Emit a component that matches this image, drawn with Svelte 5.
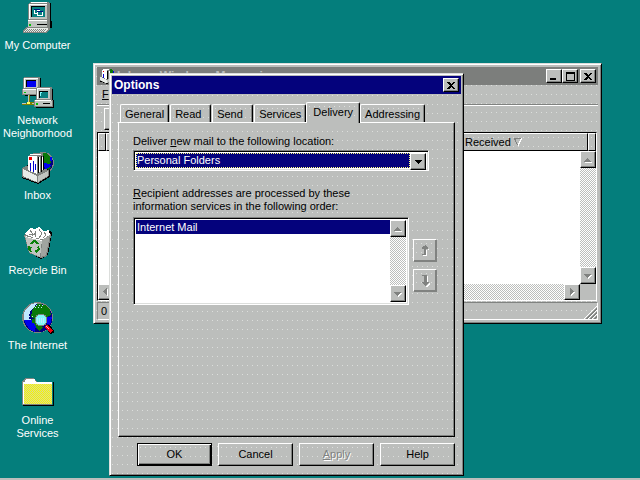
<script>
  const tabs = ['General', 'Read', 'Send', 'Services', 'Delivery', 'Addressing'];
  let active = $state('Delivery');
</script>

{#snippet computer()}
  <path fill="#000" d="M8 1h21v18h-2v8h-3v4H3v-2h21V3H8z" />
  <path fill="#000" d="M28 1h1v18h-1zM28 19h2v7h-2z" />
  <path fill="#808480" d="M6 2l3-2h17l2 2v16H6zM6 18h22v7H6z" />
  <path fill="#c0c4c0" d="M7 2h18v15H7zM6 19h19v6H6z" />
  <path fill="#fff" d="M7 2h18v1H8v14H7zM9 0h16v1H9zM6 18h19v1H6z" />
  <path fill="#000" d="M9 4h14v11H9z" />
  <path fill="#088080" d="M10 5h13v10H10z" />
  <path fill="#fff" d="M12 7h6v5h-6zM15 9h6v5h-6z" />
  <path fill="#001080" d="M12 7h6v1h-6zM15 9h6v1h-6z" />
  <path fill="#088080" d="M13 8h2v3h-2zM16 10h4v3h-4z" />
  <path fill="#000" d="M15 22h10v1H15z" />
  <path fill="#00c000" d="M7 22h2v2H7z" />
  <path fill="#808480" d="M4 25h24v2l-3 4H1v-2z" />
  <path fill="#e8ece8" d="M5 26h21v1l-3 3H2v-1z" />
  <path stroke="#808480" stroke-dasharray="1 1" d="M5 27.500h19M4 28.500h19M3 29.500h19" />
{/snippet}

{#snippet network()}
  <path fill="#000" d="M3 1h16v12h1v6H3z" />
  <path fill="#808480" d="M1 1l2-1h14l1 1v11H1zM0 12h19v6H0z" />
  <path fill="#c0c4c0" d="M2 2h14v9H2zM1 13h17v4H1z" />
  <path fill="#fff" d="M2 1h14v1H3v9H2zM1 12h16v1H1z" />
  <path fill="#000" d="M4 3h10v7H4z" />
  <path fill="#0000f0" d="M5 4h9v6H5z" />
  <path fill="#00c000" d="M2 15h2v1H2z" />
  <path fill="#808000" d="M6 18h2v7h5v3H0v-2h6z" />
  <path fill="#c0c4c0" d="M0 26h4v1H0zM10 26h3v1h-3zM6 18h1v7H6z" />
  <path fill="#ffff60" d="M5 25h3v2H5z" />
  <path fill="#000" d="M16 12h15v11h1v8H14v-1h15z" />
  <path fill="#808480" d="M14 11l2-1h13l1 1v12H14zM12 23h19v7H12z" />
  <path fill="#c0c4c0" d="M15 12h13v10H15zM13 24h17v5H13z" />
  <path fill="#fff" d="M15 11h13v1H16v10h-1zM13 23h16v1H13z" />
  <path fill="#000" d="M17 14h9v7h-9z" />
  <path fill="#088080" d="M18 15h8v6h-8z" />
  <path fill="#80ffff" d="M18 15h2v1h-1v3h-1z" />
  <path fill="#000" d="M21 26h7v1h-7z" />
  <path fill="#00c000" d="M14 26h2v2h-2z" />
{/snippet}

{#snippet inbox()}
  <circle cx="21" cy="11" r="11" fill="#808480" />
  <circle cx="21" cy="11" r="10" fill="#000080" />
  <path fill="#087808" d="M17 1h7l4 3 2 4-2 4-4 1-4-5zM25 15h4l-3 4h-3z" />
  <path fill="#0000f0" d="M22 11l6 1 1 2-6 4zM28 5h2v4h-2z" />
  <path fill="#000" d="M0 16l6-3 22 5v7l-12 7L0 26z" />
  <path fill="#808480" d="M0 16l7-3 20 5v6l-11 7L0 25z" />
  <path fill="#e8ece8" d="M1 17l14 7v6L1 24z" />
  <path fill="#c0c4c0" d="M16 24l10-5v5l-10 6z" />
  <path fill="#808480" d="M6 4l6-3h9v18l-6 5-9-5z" />
  <path fill="#000" d="M16 5h1v16h-1zM19 4h1v16h-1zM21 4h1v14h-1z" />
  <path fill="#fff" d="M6 4h9v18l-9-4zM17 5h1v15h-1zM20 5h1v13h-1zM8 2h11v1H8z" />
  <path fill="#f00000" d="M7 5h3v3H7z" />
  <path fill="#0000d0" d="M8 11h1v8H8zM11 9h1v11h-1zM13 12h1v6h-1z" />
{/snippet}

{#snippet bin()}
  <path fill="#000" d="M7 6l22-2 1 2-4 22-7 4-9-5z" />
  <path fill="#808480" d="M2 8l7-3h18l2 3-4 21-6 2-12-5z" />
  <path fill="#c0c4c0" d="M3 9l17 4-2 17-11-5z" />
  <path fill="#a0a4a0" d="M20 13l8-5-4 20-5 2z" />
  <path fill="#fff" d="M3 6l5-5 5 1 4-2 5 4 5-1 1 5-7 4-9-1-9-4zM3 9l17 4v1L4 10z" />
  <path stroke="#808480" fill="none" d="M8 3l3 4-4 1M14 4l-1 6M17 2l3 5-3 4M22 5l2 3-3 3M10 9l4-3" />
  <path fill="#088008" d="M9 15l3-2 3 1 2 3h-3l-2-2-1 2H8zM6 19l4 1-1 3 1 2H8l-2-3zM14 20l3-1 1 3-3 3v2l-3-3 2-2v1l2-2z" />
{/snippet}

{#snippet internet()}
  <circle cx="15.500" cy="15.500" r="15.500" fill="#808480" />
  <circle cx="16" cy="16" r="14.500" fill="#000080" />
  <path fill="#0000f0" d="M2 18h8l4 5-1 7-6-3zM24 15h6l-2 8-5-3z" />
  <path fill="#c0e8ff" d="M4 7l5-5 6-1-3 5-4 3-1 6 1 3H2v-7z" />
  <path fill="#087808" d="M11 6l5-4 7 1 5 5 1 5-5 3-6-3-5 4-4-2 1-5zM10 17l6-2 1 7 4 3-4 4-3-3-1-4-3-1z" />
  <path stroke="#c0e8ff" stroke-dasharray="1 2" d="M14 3h8M13 5h7M4 14h7M5 17h5" />
  <circle cx="19" cy="18" r="6.500" fill="#808480" />
  <circle cx="19" cy="18" r="5.500" fill="#80f8f8" />
  <path stroke="#c0e8ff" stroke-dasharray="1 1" stroke-width="5" d="M15 18h8" />
  <path stroke="#000" stroke-width="5" d="M25 24l6 7" />
  <path stroke="#f00010" stroke-width="3" d="M24 24l6 6" />
  <path stroke="#ffc0c0" d="M24 24l3 3" />
{/snippet}

{#snippet folder()}
  <path fill="#000" d="M2 5h30v24H1v-1h30V5z" />
  <path fill="#808480" d="M0 5l3-4h9l3 4h15v23H0z" />
  <path fill="#fff" d="M1 5h2V3l2-1h8l1 3h16v2H1z" />
  <path fill="url(#weave)" d="M2 7h28v20H2z" />
  <path fill="#fff" d="M1 6h1v21H1z" />
{/snippet}

{#snippet cross()}
  <svg width="8" height="7" viewBox="0 0 8 7"><path d="M0 0h2l2 2 2-2h2L5 3.500 8 7H6L4 5 2 7H0l3-3.500z" /></svg>
{/snippet}

{#snippet arrow(d)}
  <svg width="8" height="8" viewBox="0 0 8 8"><path fill="#fff" transform="translate(1 1)" {d} /><path fill="#808280" {d} /></svg>
{/snippet}

{#snippet shortcut(name, art)}
  <a href="#open" class="shortcut">
    <svg width="32" height="32" viewBox="0 0 32 32" aria-hidden="true">{@render art()}</svg>
    <span>{name}</span>
  </a>
{/snippet}

<svg class="defs" aria-hidden="true">
  <defs>
    <pattern id="weave" width="2" height="2" patternUnits="userSpaceOnUse">
      <path fill="#f8f800" d="M0 0h2v2H0z" /><path fill="#d8d898" d="M0 0h1v1H0zM1 1h1v1H1z" />
    </pattern>
  </defs>
</svg>

<main class="desktop">
  <nav>
    {@render shortcut('My Computer', computer)}
    {@render shortcut('Network Neighborhood', network)}
    {@render shortcut('Inbox', inbox)}
    {@render shortcut('Recycle Bin', bin)}
    {@render shortcut('The Internet', internet)}
    {@render shortcut('Online Services', folder)}
  </nav>

  <section class="window mail" aria-label="Inbox">
    <header class="title">
      <svg width="16" height="16" viewBox="0 0 32 32" aria-hidden="true">{@render inbox()}</svg>
      <h2>Inbox - Windows Messaging</h2>
      <button class="raised cap" aria-label="Minimize"><svg width="8" height="7" viewBox="0 0 8 7"><path d="M0 5h6v2H0z" /></svg></button>
      <button class="raised cap" aria-label="Maximize"><svg width="9" height="9" viewBox="0 0 9 9"><path fill-rule="evenodd" d="M0 0h9v9H0zM1 2v6h7V2z" /></svg></button>
      <button class="raised cap close" aria-label="Close">{@render cross()}</button>
    </header>
    <div class="menu"><button><u>F</u>ile</button></div>
    <div class="tools"><button class="raised tool" aria-label="Folder list"><svg width="14" height="12" viewBox="0 0 14 12"><path d="M0 0h14v12H0z" /><path fill="#f8f800" d="M2 1h11v10H2z" /></svg></button></div>
    <div class="list">
      <table>
        <thead><tr><th class="slim"></th><th></th><th class="received">Received
          <svg width="8" height="8" viewBox="0 0 8 8"><path fill="none" stroke="#808280" d="M7 0.500H0.500L3.500 7" /><path fill="none" stroke="#fff" d="M7.500 0.500L4 7.500" /></svg></th><th class="rest"></th></tr></thead>
      </table>
      <div class="body">
        <div class="paper"></div>
        <div class="vbar">
          <button class="raised sb" aria-label="Up">{@render arrow('M3 2h1v1h1v1h1v1h1v1H0V5h1V4h1V3h1z')}</button>
          <button class="raised sb" aria-label="Down">{@render arrow('M0 2h7v1H6v1H5v1H4v1H3V5H2V4H1V3H0z')}</button>
        </div>
      </div>
      <div class="hbar">
        <button class="raised sb" aria-label="Left">{@render arrow('M5 0v7H4V6H3V5H2V4H1V3h1V2h1V1h1V0z')}</button>
        <span></span>
        <button class="raised sb" aria-label="Right">{@render arrow('M2 0v7h1V6h1V5h1V4h1V3H5V2H4V1H3V0z')}</button>
        <i></i>
      </div>
    </div>
    <footer>
      <span>0</span>
      <svg width="13" height="13" viewBox="0 0 13 13"><path stroke="#fff" d="M0 13L13 0M4 13l9-9M8 13l5-5" /><path stroke="#808280" stroke-width="2" d="M2 13.500L13.500 2M6 13.500L13.500 6M10 13.500l3.500-3.500" /></svg>
    </footer>
  </section>

  <section class="window options" role="dialog" aria-label="Options">
    <header class="title on">
      <h2>Options</h2>
      <button class="raised cap close" aria-label="Close">{@render cross()}</button>
    </header>
    <div class="tabs" role="tablist">
      {#each tabs as tab}
        <button role="tab" class="tab" class:active={tab === active} aria-selected={tab === active} onclick={() => (active = tab)}>{tab}</button>
      {/each}
    </div>
    <div class="panel" role="tabpanel">
      <label for="place">Deliver <u>n</u>ew mail to the following location:</label>
      <div class="sunken combo">
        <select id="place"><option>Personal Folders</option></select>
        <span class="raised sb"><svg width="7" height="4" viewBox="0 0 7 4"><path d="M0 0h7v1H6v1H5v1H4v1H3V3H2V2H1V1H0z" /></svg></span>
      </div>
      <p id="order"><u>R</u>ecipient addresses are processed by these<br />information services in the following order:</p>
      <div class="services">
        <div class="sunken box">
          <ul role="listbox" aria-labelledby="order"><li role="option" aria-selected="true">Internet Mail</li></ul>
          <div class="vbar">
            <button class="raised sb" aria-label="Scroll up">{@render arrow('M3 2h1v1h1v1h1v1h1v1H0V5h1V4h1V3h1z')}</button>
            <button class="raised sb" aria-label="Scroll down">{@render arrow('M0 2h7v1H6v1H5v1H4v1H3V5H2V4H1V3H0z')}</button>
          </div>
        </div>
        <div class="moves">
          <button class="move" disabled aria-label="Move up"><svg width="9" height="12" viewBox="0 0 9 12"><path fill="#fff" d="M7 4h1v1H6v6H2v-1h3V5h2z" /><path fill="#808280" d="M4 0h1v1h1v1h1v2H5v6H1V9h2V4H1V2h1V1h2z" /></svg></button>
          <button class="move" disabled aria-label="Move down"><svg width="9" height="12" viewBox="0 0 9 12"><path fill="#fff" d="M6 1h1v6H6zM8 8h1v1l-3 3H5z" /><path fill="#808280" d="M1 0h5v7h2v1H7v1H6v1H5v1H4v-1H3V9H2V8H1V7h2V1H1z" /></svg></button>
        </div>
      </div>
    </div>
    <div class="actions">
      <button class="default">OK</button>
      <button class="push">Cancel</button>
      <button class="push" disabled><u>A</u>pply</button>
      <button class="push">Help</button>
    </div>
  </section>

  <div class="taskbar"></div>
</main>

<style>
  :global(body) { margin: 0; background: #047e7c; }
  * { box-sizing: border-box; }
  .desktop {
    --face: #bcbebc;
    --dark: #808280;
    --navy: #04027c;
    --dots: conic-gradient(from 270deg at 1px 1px, #dcdedc 90deg, transparent 0) 2px 3px / 5px 9px var(--face);
    position: relative;
    min-height: 100vh;
    overflow: hidden;
    background: #047e7c;
    color: #000;
    font: 11px/13px "Liberation Sans", Arial, sans-serif;
  }
  .defs { position: absolute; width: 0; height: 0; }
  svg { display: block; flex: none; shape-rendering: crispEdges; }
  button, select { font: inherit; color: inherit; margin: 0; padding: 0; border: 0; border-radius: 0; outline: 0; }
  h2 { margin: 0; font: bold 12px/18px "Liberation Sans", Arial, sans-serif; flex: 1; white-space: nowrap; }
  p { margin: 0; }

  nav { display: grid; grid-auto-rows: 75px; width: 75px; padding-top: 2px; }
  .shortcut { display: flex; flex-direction: column; align-items: center; gap: 5px; padding: 0 2px; color: #fff; text-align: center; text-decoration: none; }

  .window { position: absolute; display: flex; flex-direction: column; padding: 2px; background: var(--dots); border: 1px solid; border-color: #dcdedc #000 #000 #dcdedc; box-shadow: inset 1px 1px #fff, inset -1px -1px var(--dark); }
  .title { display: flex; align-items: center; height: 18px; padding: 0 2px; gap: 2px; background: #7c7e7c; color: var(--face); }
  .title.on { background: var(--navy); color: #fff; }
  .raised { display: flex; align-items: center; justify-content: center; flex: none; background: var(--face); border: 1px solid; border-color: #fff #000 #000 #fff; box-shadow: inset -1px -1px var(--dark); }
  .sunken { border: 1px solid; border-color: var(--dark) #fff #fff var(--dark); box-shadow: inset 1px 1px #000, inset -1px -1px #dcdedc; padding: 2px; background: #fff; }
  .cap { width: 16px; height: 14px; }
  .cap + .cap { margin-left: -2px; }
  .cap + .close { margin-left: 0; }
  .sb { width: 16px; height: 17px; }

  .mail { left: 93px; top: 63px; width: 509px; height: 261px; padding: 3px; }
  .menu { height: 20px; padding: 3px 5px; border-bottom: 1px solid var(--dark); }
  .menu button { background: none; }
  .tools { height: 27px; padding: 2px 7px; border-top: 1px solid #fff; }
  .tool { width: 23px; height: 22px; }
  .list { flex: 1; display: flex; flex-direction: column; margin-right: 1px; border: 1px solid; border-color: #000 #fff #fff #000; }
  table { width: 100%; border-collapse: separate; border-spacing: 0; table-layout: fixed; }
  th { height: 18px; padding: 0 4px; font-weight: normal; text-align: left; background: var(--dots); border: 1px solid; border-color: #fff #000 #000 #fff; }
  .slim { width: 8px; padding: 0; }
  .received { width: 128px; padding: 0 4px; }
  .received svg { display: inline-block; }
  .rest { width: 8px; padding: 0; }
  .body { flex: 1; display: flex; }
  .paper { flex: 1; background: #fff; }
  .vbar { display: flex; flex-direction: column; justify-content: space-between; width: 16px; background: repeating-conic-gradient(#fff 0 25%, var(--face) 0 50%) 0 0 / 2px 2px; }
  .hbar { display: flex; height: 16px; background: var(--face); }
  .hbar span { flex: 1; background: repeating-conic-gradient(#fff 0 25%, var(--face) 0 50%) 0 0 / 2px 2px; }
  .hbar .sb { height: 16px; }
  .hbar i { width: 16px; }
  footer { display: flex; justify-content: space-between; align-items: flex-end; height: 18px; margin-top: 1px; border: 1px solid; border-color: var(--dark) #fff #fff var(--dark); }
  footer span { padding: 1px 3px; }

  .options { left: 109px; top: 73px; width: 355px; height: 403px; }
  .tabs { display: flex; align-items: flex-end; height: 28px; padding-left: 8px; }
  .tab { min-width: 41px; height: 18px; padding: 2px 4px 0; margin-right: 1px; text-align: left; background: var(--dots); border: 1px solid; border-color: #fff #000 transparent #fff; border-bottom: 0; border-radius: 2px 2px 0 0; box-shadow: inset -1px 0 var(--dark); }
  .tab.active { height: 21px; margin: 0 0 -1px -1px; padding: 0 6px 2px; z-index: 1; }
  .panel { flex: 1; margin: 0 6px; padding: 12px 14px; border: 1px solid; border-color: #fff #000 #000 #fff; box-shadow: inset -1px -1px var(--dark); }
  .combo { display: flex; height: 21px; margin: 2px 11px 16px 0; }
  select { flex: 1; appearance: none; background: var(--navy); color: #fff; border: 1px dotted #ffff80; }
  .services { display: flex; gap: 4px; margin-top: 4px; }
  .box { display: flex; flex: 1; height: 88px; }
  ul { flex: 1; margin: 0; padding: 0; list-style: none; }
  li { padding: 0 1px; line-height: 14px; background: var(--navy); color: #fff; }
  .moves { display: flex; flex-direction: column; gap: 7px; padding-top: 22px; margin-right: 3px; }
  .move { display: grid; place-items: center; width: 24px; height: 23px; background: var(--dots); border: 1px solid; border-color: #fff var(--dark) var(--dark) #fff; box-shadow: inset -1px -1px var(--dark); }
  .actions { display: grid; grid-template-columns: repeat(4, 1fr); gap: 6px; padding: 6px 6px 7px 25px; }
  .actions button { height: 23px; background: var(--dots); border: 1px solid; border-color: #fff #000 #000 #fff; box-shadow: inset -1px -1px var(--dark); }
  .actions .default { border-color: #000; box-shadow: inset 1px 1px #fff, inset -1px -1px #000, inset -2px -2px var(--dark); }
  .actions button:disabled { color: var(--dark); text-shadow: 1px 1px #fff; }

  .taskbar { position: absolute; inset: auto 0 0; height: 2px; background: var(--face); }
</style>
